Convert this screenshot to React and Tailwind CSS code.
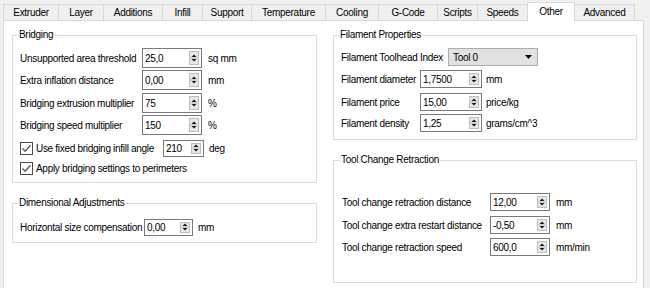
import React from "react";

const tabs = [
  ["Extruder", "w-[56px]"],
  ["Layer", "w-[46px]"],
  ["Additions", "w-[60px]"],
  ["Infill", "w-[41px]"],
  ["Support", "w-[50px]"],
  ["Temperature", "w-[75px]"],
  ["Cooling", "w-[54px]"],
  ["G-Code", "w-[60px]"],
  ["Scripts", "w-[41px]"],
  ["Speeds", "w-[51px]"],
  ["Other", "w-[48px]"],
  ["Advanced", "w-[61px]"],
];

function SpinArrows() {
  return (
    <div className="mr-[2px] flex h-[calc(100%-4px)] w-[10px] items-center justify-center border border-[#bdbdbd] bg-[#e8e8e8]">
      <svg width="8" height="12" viewBox="0 0 8 12">
        <path d="M1.5 5 L6.5 5 L4 2.5 Z" fill="#1a1a1a" />
        <line x1="0.5" y1="6" x2="7.5" y2="6" stroke="#b8b8b8" strokeWidth="1" />
        <path d="M1.5 7 L6.5 7 L4 9.5 Z" fill="#1a1a1a" />
      </svg>
    </div>
  );
}

function SpinBox({ value, size }) {
  return (
    <div className={`flex items-center border border-[#7a7a7a] bg-white ${size}`}>
      <span className="flex-1 pl-[2px]">{value}</span>
      <SpinArrows />
    </div>
  );
}

function Check() {
  return (
    <div className="flex h-[13px] w-[13px] items-center justify-center border border-[#4a4a4a] bg-white">
      <svg width="11" height="11" viewBox="0 0 11 11">
        <path d="M1.5 5.5 L4.2 8.3 L9.5 2.2" fill="none" stroke="#5a5a5a" strokeWidth="1.3" />
      </svg>
    </div>
  );
}

function Group({ title, className, children }) {
  return (
    <fieldset className={`border border-[#dcdcdc] ${className}`}>
      <legend className="-ml-[2px] px-[1px] leading-[12px]">{title}</legend>
      {children}
    </fieldset>
  );
}

export default function App() {
  return (
    <div className="h-[288px] w-[650px] overflow-hidden bg-[#f0f0f0] font-['Liberation_Sans',Arial,sans-serif] text-[10px] tracking-[-0.3px] text-black">
      {/* tab bar */}
      <div className="flex h-[20px] items-end pl-[3px]">
        {tabs.map(([name, w]) =>
          name === "Other" ? (
            <div
              key={name}
              className={`z-10 -mb-px -ml-px flex h-[19px] items-center justify-center border border-b-0 border-[#d9d9d9] bg-white pb-[2px] ${w}`}
            >
              {name}
            </div>
          ) : (
            <div
              key={name}
              className={`-ml-px flex h-[16px] items-center justify-center border border-b-0 border-[#d9d9d9] bg-[#f0f0f0] first:ml-0 ${w}`}
            >
              {name}
            </div>
          )
        )}
      </div>

      {/* pane */}
      <div className="ml-[3px] flex h-[270px] w-[641px] gap-[16px] border border-[#d9d9d9] bg-white pl-[8px] pt-[8px]">
        {/* left column */}
        <div className="flex w-[305px] flex-col">
          <Group title="Bridging" className="pb-[4px] pl-[7px] pt-[7px]">
            <div className="flex h-[20px] items-center">
              <span className="w-[122px]">Unsupported area threshold</span>
              <SpinBox value="25,0" size="h-[20px] w-[60px]" />
              <span className="ml-[6px]">sq mm</span>
            </div>
            <div className="mt-[2px] flex h-[20px] items-center">
              <span className="w-[122px]">Extra inflation distance</span>
              <SpinBox value="0,00" size="h-[20px] w-[60px]" />
              <span className="ml-[6px]">mm</span>
            </div>
            <div className="mt-[3px] flex h-[20px] items-center">
              <span className="w-[122px]">Bridging extrusion multiplier</span>
              <SpinBox value="75" size="h-[20px] w-[60px]" />
              <span className="ml-[6px]">%</span>
            </div>
            <div className="mt-[2px] flex h-[20px] items-center">
              <span className="w-[122px]">Bridging speed multiplier</span>
              <SpinBox value="150" size="h-[20px] w-[60px]" />
              <span className="ml-[6px]">%</span>
            </div>
            <div className="mt-[3px] flex h-[20px] items-center">
              <Check />
              <span className="ml-[3px] w-[127px]">Use fixed bridging infill angle</span>
              <SpinBox value="210" size="h-[17px] w-[41px]" />
              <span className="ml-[5px]">deg</span>
            </div>
            <div className="flex h-[20px] items-center">
              <Check />
              <span className="ml-[3px]">Apply bridging settings to perimeters</span>
            </div>
          </Group>

          <Group title="Dimensional Adjustments" className="mt-[14px] pb-[6px] pl-[7px] pt-[9px]">
            <div className="flex h-[18px] items-center">
              <span className="w-[124px]">Horizontal size compensation</span>
              <SpinBox value="0,00" size="h-[17px] w-[49px]" />
              <span className="ml-[5px]">mm</span>
            </div>
          </Group>
        </div>

        {/* right column */}
        <div className="flex w-[304px] flex-col">
          <Group title="Filament Properties" className="pb-[7px] pl-[7px] pt-[7px]">
            <div className="flex h-[18px] items-center">
              <span className="w-[107px]">Filament Toolhead Index</span>
              <div className="flex h-[18px] w-[90px] items-center justify-between border border-[#adadad] bg-[#e1e1e1] pl-[4px] pr-[5px]">
                <span>Tool 0</span>
                <svg width="7" height="4" viewBox="0 0 7 4">
                  <path d="M0 0 L7 0 L3.5 4 Z" fill="#000" />
                </svg>
              </div>
            </div>
            <div className="mt-[4px] flex h-[18px] items-center">
              <span className="w-[79px]">Filament diameter</span>
              <SpinBox value="1,7500" size="h-[18px] w-[62px]" />
              <span className="ml-[4px]">mm</span>
            </div>
            <div className="mt-[5px] flex h-[18px] items-center">
              <span className="w-[79px]">Filament price</span>
              <SpinBox value="15,00" size="h-[18px] w-[62px]" />
              <span className="ml-[4px]">price/kg</span>
            </div>
            <div className="mt-[3px] flex h-[18px] items-center">
              <span className="w-[79px]">Filament density</span>
              <SpinBox value="1,25" size="h-[18px] w-[62px]" />
              <span className="ml-[4px]">grams/cm^3</span>
            </div>
          </Group>

          <Group title="Tool Change Retraction" className="mt-[14px] pb-[26px] pl-[8px] pt-[27px]">
            <div className="flex h-[18px] items-center">
              <span className="w-[148px]">Tool change retraction distance</span>
              <SpinBox value="12,00" size="h-[18px] w-[60px]" />
              <span className="ml-[6px]">mm</span>
            </div>
            <div className="mt-[5px] flex h-[18px] items-center">
              <span className="w-[148px]">Tool change extra restart distance</span>
              <SpinBox value="-0,50" size="h-[18px] w-[60px]" />
              <span className="ml-[6px]">mm</span>
            </div>
            <div className="mt-[4px] flex h-[18px] items-center">
              <span className="w-[148px]">Tool change retraction speed</span>
              <SpinBox value="600,0" size="h-[18px] w-[60px]" />
              <span className="ml-[6px]">mm/min</span>
            </div>
          </Group>
        </div>
      </div>
    </div>
  );
}
